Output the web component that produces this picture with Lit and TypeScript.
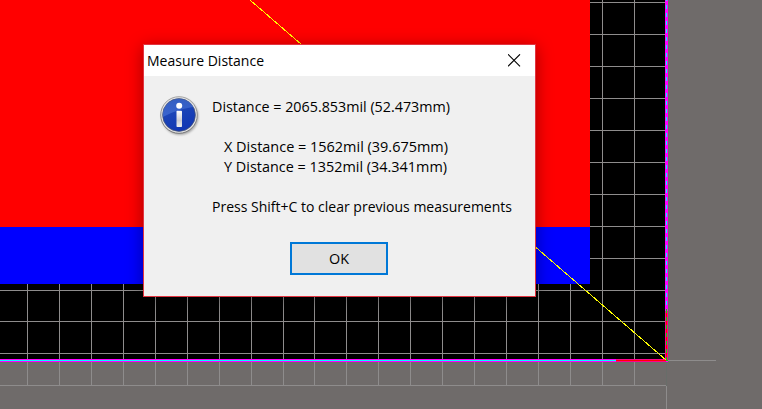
import { LitElement, html, svg, css } from "lit";
import { customElement, property } from "lit/decorators.js";

const range = (n: number) => Array.from({ length: n }, (_, i) => i);
const columns = [27, 59, 91, 123, 155, 187, 219, 251, 283, 314, 346, 378, 410, 442, 474, 506, 538, 570, 602, 634];
const rows = [2, 34, 66, 98, 130, 162, 194, 226, 258, 290, 321, 353];

// One line of dialog text, fitted to a given advance width.
@customElement("fit-text")
class FitText extends LitElement {
  @property() text = "";
  @property({ type: Number }) width = 100;

  static styles = css`
    :host { display: block; height: 20px; }
    svg { display: block; overflow: visible; }
    text { font-family: "Open Sans", "Noto Sans", sans-serif; font-size: 15px; fill: #000; }
  `;

  render() {
    return html`<svg width=${this.width} height="20">
      <text x="0" y="15" textLength=${this.width} lengthAdjust="spacingAndGlyphs">${this.text}</text>
    </svg>`;
  }
}

@customElement("board-canvas")
class BoardCanvas extends LitElement {
  static styles = css`
    :host { display: block; }
    svg { display: block; }
  `;

  render() {
    return html`<svg width="762" height="409" viewBox="0 0 762 409" shape-rendering="crispEdges">
      <rect width="762" height="409" fill="#6f6b6a" />
      <rect width="665" height="359" fill="#000" />
      <g fill="#8e8c8c">
        ${columns.map((x) => svg`<rect x=${x} y="0" width="1" height="386" />`)}
        ${rows.map((y) => svg`<rect x="0" y=${y} width="665" height="1" />`)}
        <rect x="0" y="385" width="666" height="1" />
        <rect x="666" y="386" width="1" height="23" />
        <rect x="668" y="360" width="48" height="1" />
      </g>
      <rect x="666" y="362" width="1" height="24" fill="#686d69" />
      <rect width="590" height="227" fill="#f00" />
      <rect y="227" width="590" height="57" fill="#00f" />
      <rect y="359" width="668" height="3" fill="#f0f" />
      <rect x="665" width="3" height="361" fill="#f0f" />
      <rect y="360" width="616" height="1" fill="#0ff" />
      <rect x="616" y="360" width="50" height="1" fill="#f00" />
      <rect x="616" y="359" width="50" height="3" fill="#f00" opacity=".45" />
      <rect x="666" y="311" width="1" height="49" fill="#f00" />
      <rect x="665" y="311" width="3" height="49" fill="#f00" opacity=".45" />
      ${range(46).map((i) => svg`<rect x="666" y=${i * 8 - 3} width="1" height="4" fill=${i * 8 - 3 < 309 ? "#0ff" : "#0d0"} />`)}
      <rect x="666" y="360" width="2" height="1" fill="#0d0" />
      <line x1="250" y1="0" x2="666" y2="360" stroke="#ff0" stroke-width="1" />
    </svg>`;
  }
}

@customElement("app-root")
class AppRoot extends LitElement {
  static styles = css`
    :host { display: block; position: relative; width: 762px; height: 409px; overflow: hidden; }
    .dialog {
      position: absolute; left: 143px; top: 44px; width: 393px; height: 253px;
      box-sizing: border-box; border: 1px solid #e23440; background: #f0f0f0;
      box-shadow: 0 3px 16px rgba(0, 0, 0, .36);
      display: flex; flex-direction: column;
    }
    .title {
      height: 31px; background: #fff; display: flex; justify-content: space-between;
      align-items: center; padding: 0 14px 0 3px;
    }
    .close { display: block; }
    .content { display: flex; padding: 19px 0 0 14px; height: 120px; }
    .info { flex: none; width: 42px; height: 42px; }
    .message { display: flex; flex-direction: column; padding: 2px 0 0 12px; }
    .indent { margin-left: 12px; }
    .gap { margin-top: 20px; }
    .ok {
      box-sizing: border-box; width: 98px; height: 33px; margin: 27px 0 0 146px; padding: 0;
      border: 2px solid #0078d7; background: #e1e1e1; border-radius: 0;
      display: flex; align-items: center; justify-content: center;
    }
  `;

  render() {
    return html`
      <board-canvas></board-canvas>
      <section class="dialog" role="dialog">
        <header class="title">
          <fit-text text="Measure Distance" width="117"></fit-text>
          <svg class="close" width="13" height="13" viewBox="0 0 13 13">
            <path d="M0 .3l12 12M12 .3l-12 12" stroke="#000" stroke-width="1.1" fill="none" />
          </svg>
        </header>
        <div class="content">
          <svg class="info" width="42" height="42" viewBox="0 0 42 42">
            <defs>
              <linearGradient id="ring" x1="0" y1="0" x2="0" y2="1">
                <stop offset="0" stop-color="#a5a5a5" /><stop offset="1" stop-color="#777" />
              </linearGradient>
              <linearGradient id="blue" x1="0" y1="0" x2=".5" y2="1">
                <stop offset="0" stop-color="#2450ba" /><stop offset="1" stop-color="#1238b4" />
              </linearGradient>
              <linearGradient id="shine" x1="0" y1="0" x2="0" y2="1">
                <stop offset="0" stop-color="#416bc8" /><stop offset="1" stop-color="#4f7be0" />
              </linearGradient>
              <linearGradient id="stem" x1="0" y1="0" x2="0" y2="1">
                <stop offset="0" stop-color="#fff" /><stop offset=".6" stop-color="#cfcfd4" /><stop offset="1" stop-color="#eee" />
              </linearGradient>
              <filter id="soft"><feGaussianBlur stdDeviation="1" /></filter>
            </defs>
            <circle cx="22" cy="21.500" r="18.300" fill="#777" opacity=".65" filter="url(#soft)" />
            <circle cx="21" cy="20" r="18.300" fill="#e4e4e4" stroke="url(#ring)" stroke-width="1" />
            <circle cx="21" cy="20" r="16.400" fill="url(#blue)" stroke="#46516e" stroke-width=".7" />
            <path d="M4.800 22C4 12 11 4 21 4c7 0 12 3 14.500 8C27 13 16 16 4.800 22z" fill="url(#shine)" opacity=".6" />
            <circle cx="21.200" cy="10.800" r="3" fill="#fff" />
            <rect x="18.500" y="15.700" width="5.500" height="16.300" rx=".8" fill="url(#stem)" />
          </svg>
          <div class="message">
            <fit-text text="Distance = 2065.853mil (52.473mm)" width="238"></fit-text>
            <fit-text class="indent gap" text="X Distance = 1562mil (39.675mm)" width="224"></fit-text>
            <fit-text class="indent" text="Y Distance = 1352mil (34.341mm)" width="223"></fit-text>
            <fit-text class="gap" text="Press Shift+C to clear previous measurements" width="300"></fit-text>
          </div>
        </div>
        <button class="ok"><fit-text text="OK" width="20"></fit-text></button>
      </section>
    `;
  }
}
